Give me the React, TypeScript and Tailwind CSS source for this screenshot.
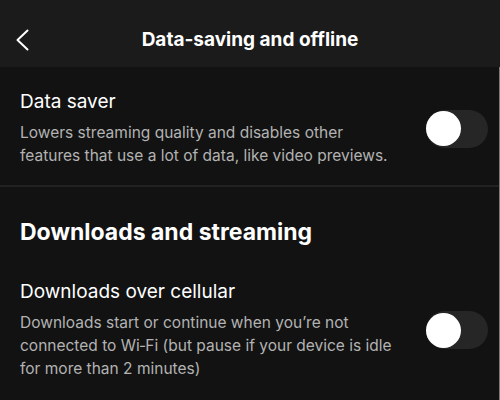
function Toggle() {
  return (
    <div className="flex h-[38px] w-[62px] shrink-0 items-center rounded-full bg-[#262626]">
      <div className="h-[35px] w-[35px] rounded-full bg-white" />
    </div>
  );
}

function SettingRow({ title, description }: { title: string; description: string }) {
  return (
    <div className="flex items-center justify-between pl-5 pr-[11px]">
      <div className="w-[380px]">
        <div className="text-[19px] leading-6 text-white">{title}</div>
        <p className="mt-[7px] text-[15.5px] leading-[23px] text-[#b3b3b3]">{description}</p>
      </div>
      <Toggle />
    </div>
  );
}

export default function App() {
  return (
    <div className="flex h-[400px] w-[500px] flex-col overflow-hidden bg-[#121212] font-['Inter','Noto_Sans',sans-serif]">
      {/* Header */}
      <header className="relative flex h-[67px] shrink-0 items-center justify-center bg-[#1b1b1b] pt-[13px]">
        <button className="absolute left-[15px] top-[28px] text-white">
          <svg width="16" height="24" viewBox="0 0 16 24" fill="none" stroke="currentColor" strokeWidth="2" strokeLinecap="round" strokeLinejoin="round">
            <polyline points="12.5,2.5 2.5,12 12.5,21.5" />
          </svg>
        </button>
        <h1 className="text-[19px] font-bold text-white">Data-saving and offline</h1>
      </header>

      <main className="flex-1 border-r border-[#7a7a7a]">
        <div className="pt-[23px] pb-[18px]">
          <SettingRow
            title="Data saver"
            description="Lowers streaming quality and disables other features that use a lot of data, like video previews."
          />
        </div>
        <div className="h-[2px] bg-[#222222]" />

        <h2 className="px-5 pt-[31px] text-[23px] font-bold leading-7 text-white">Downloads and streaming</h2>

        <div className="pt-[34px]">
          <SettingRow
            title="Downloads over cellular"
            description="Downloads start or continue when you’re not connected to Wi‑Fi (but pause if your device is idle for more than 2 minutes)"
          />
        </div>
      </main>
    </div>
  );
}
